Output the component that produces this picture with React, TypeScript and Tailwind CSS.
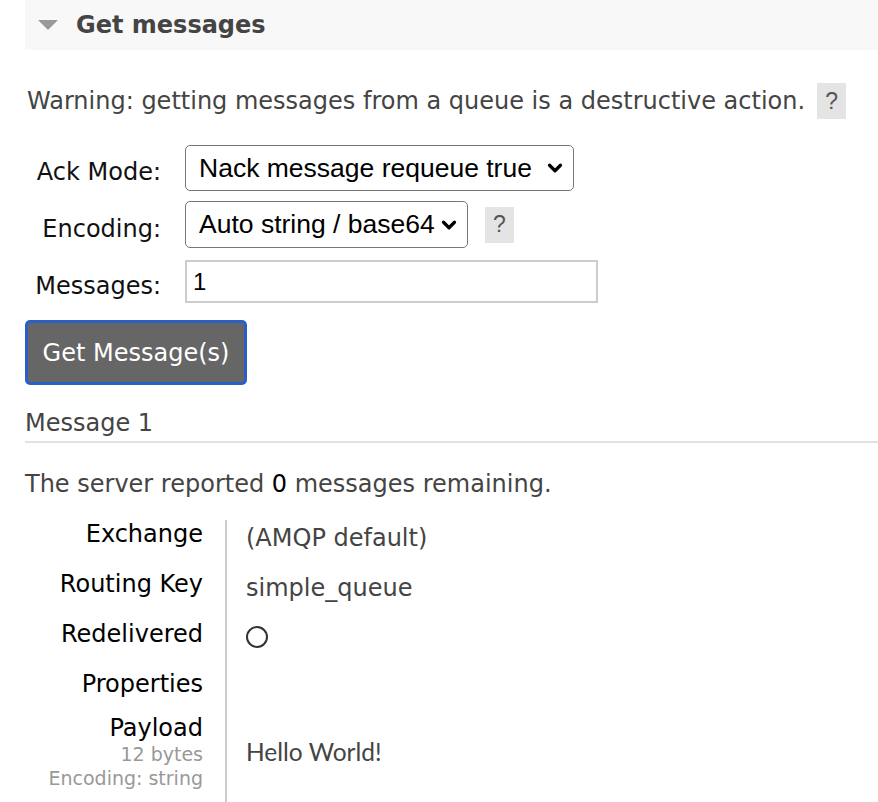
import { ChevronDown } from 'lucide-react';

const verdana = { fontFamily: 'Verdana, "DejaVu Sans", sans-serif' };
const arial = { fontFamily: '"Liberation Sans", Arial, sans-serif' };

function HelpBox({ className = '' }: { className?: string }) {
	return (
		<span
			className={`inline-flex h-[36px] w-[29px] shrink-0 items-center justify-center bg-[#e4e4e4] text-[23px] text-[#555] ${className}`}
			style={arial}
		>
			?
		</span>
	);
}

function Select({ value, className }: { value: string; className: string }) {
	return (
		<div
			className={`flex items-center justify-between rounded-[5px] border border-[#777] bg-white pl-[13px] pr-[7px] text-[26.5px] text-black ${className}`}
			style={arial}
		>
			<span className="leading-none">{value}</span>
			<ChevronDown size={22} strokeWidth={3.5} />
		</div>
	);
}

function FormRow({ label, children }: { label: string; children: React.ReactNode }) {
	return (
		<div className="flex items-center">
			<span className="mt-[8px] w-[136px] shrink-0 text-right text-[24px] leading-[28px] text-[#111]">{label}</span>
			<div className="ml-[24px] flex items-center">{children}</div>
		</div>
	);
}

function Row({ label, children, height }: { label: string; children?: React.ReactNode; height: string }) {
	return (
		<>
			<div className={`${height} border-r-2 border-[#ccc] pr-[22px] text-right text-[24px] leading-[28px] text-black`}>
				{label}
			</div>
			<div className={`${height} pl-[19px] pt-[4px] text-[24px] leading-[28px] text-[#444]`}>{children}</div>
		</>
	);
}

export default function App() {
	return (
		<div className="h-[802px] w-[878px] overflow-hidden bg-white pl-[25px] text-[#444]" style={verdana}>
			<div className="flex h-[50px] items-center bg-[#f8f8f8]">
				<svg width="20" height="10" viewBox="0 0 20 10" className="ml-[13px] mr-[18px]">
					<polygon points="0,0 20,0 10,10" fill="#999" />
				</svg>
				<span className="text-[24px] font-bold leading-[28px] text-[#444]">Get messages</span>
			</div>

			<div className="mt-[33px] flex items-center">
				<span className="pl-[2px] text-[24px] leading-[28px]">Warning: getting messages from a queue is a destructive action.</span>
				<HelpBox className="ml-[12px]" />
			</div>

			<div className="mt-[26px] flex flex-col">
				<FormRow label="Ack Mode:">
					<Select value="Nack message requeue true" className="h-[46px] w-[389px]" />
				</FormRow>
				<div className="mt-[10px]">
					<FormRow label="Encoding:">
						<Select value="Auto string / base64" className="h-[47px] w-[283px]" />
						<HelpBox className="ml-[17px]" />
					</FormRow>
				</div>
				<div className="mt-[12px]">
					<FormRow label="Messages:">
						<div className="flex h-[43px] w-[413px] items-center border-2 border-[#ccc] pl-[6px] text-[24px] text-black" style={arial}>
							1
						</div>
					</FormRow>
				</div>
			</div>

			<button className="mt-[17px] h-[65px] w-[222px] rounded-[5px] border-[3px] border-[#2a5fc8] bg-[#666] text-[24px] text-white">
				Get Message(s)
			</button>

			<div className="mt-[24px] border-b-2 border-[#e2e2e2] pb-[4px] text-[24px] leading-[28px]">Message 1</div>

			<p className="mt-[27px] text-[24px] leading-[28px]">
				The server reported <span className="text-black">0</span> messages remaining.
			</p>

			<div className="mt-[22px] grid grid-cols-[202px_1fr]">
				<Row label="Exchange" height="h-[50px]">(AMQP default)</Row>
				<Row label="Routing Key" height="h-[50px]">simple_queue</Row>
				<Row label="Redelivered" height="h-[50px]">
					<span className="mt-[2px] block h-[22px] w-[22px] rounded-full border-2 border-[#333]" />
				</Row>
				<Row label="Properties" height="h-[44px]" />
				<div className="h-[90px] border-r-2 border-[#ccc] pr-[22px] text-right text-black">
					<div className="text-[24px] leading-[28px]">Payload</div>
					<div className="text-[19px] leading-[24px] text-[#999]">12 bytes</div>
					<div className="text-[19px] leading-[24px] text-[#999]">Encoding: string</div>
				</div>
				<div className="flex h-[90px] items-center pb-[14px] pl-[19px] text-[24.5px] text-[#444]" style={{ fontFamily: 'Lato, sans-serif' }}>
					Hello World!
				</div>
			</div>
		</div>
	);
}
